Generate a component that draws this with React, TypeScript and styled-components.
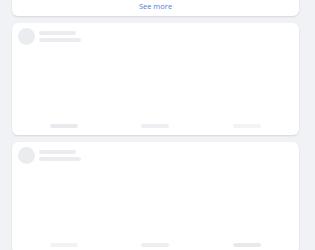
import React from "react";
import styled, { createGlobalStyle } from "styled-components";

const Global = createGlobalStyle`
  html, body { margin: 0; padding: 0; background: #f0f2f5; }
  body { font-family: "Open Sans", "Liberation Sans", sans-serif; overflow: hidden; }
`;

const Feed = styled.div`
  display: flex;
  flex-direction: column;
  gap: 7px;
  padding: 0 16px 0 12px;
  margin-top: -20px;
`;

const Card = styled.div<{ $h: number }>`
  background: #ffffff;
  border-radius: 6px;
  box-shadow: 0 1px 2px rgba(0, 0, 0, 0.12);
  height: ${(p) => p.$h}px;
  box-sizing: border-box;
  display: flex;
  flex-direction: column;
`;

const SeeMoreCard = styled(Card)`
  justify-content: flex-end;
  align-items: center;
  padding-bottom: 4px;
`;

const SeeMore = styled.a`
  color: #4f7bd8;
  font-size: 7.5px;
  line-height: 12px;
  text-decoration: none;
`;

const Header = styled.div`
  display: flex;
  align-items: center;
  gap: 4px;
  padding: 5px 6px 0 6px;
`;

const Avatar = styled.div`
  width: 17px;
  height: 17px;
  border-radius: 50%;
  background: #ebecf0;
`;

const Lines = styled.div`
  display: flex;
  flex-direction: column;
  gap: 3px;
`;

const Line = styled.div<{ $w: number }>`
  width: ${(p) => p.$w}px;
  height: 4px;
  border-radius: 2px;
  background: #ebecf0;
`;

const Body = styled.div`
  flex: 1;
`;

const Actions = styled.div`
  display: grid;
  grid-template-columns: repeat(3, 1fr);
  padding: 0 6px 7px 6px;
`;

const ActionCell = styled.div`
  display: flex;
  justify-content: center;
`;

const Bar = styled.div<{ $tone: string }>`
  width: 28px;
  height: 4px;
  border-radius: 2px;
  background: ${(p) => p.$tone};
`;

function PostSkeleton({ tones }: { tones: string[] }) {
  return (
    <Card $h={112}>
      <Header>
        <Avatar />
        <Lines>
          <Line $w={37} />
          <Line $w={42} />
        </Lines>
      </Header>
      <Body />
      <Actions>
        {tones.map((t, i) => (
          <ActionCell key={i}>
            <Bar $tone={t} />
          </ActionCell>
        ))}
      </Actions>
    </Card>
  );
}

export default function App() {
  return (
    <>
      <Global />
      <Feed>
        <SeeMoreCard $h={36}>
          <SeeMore href="#">See more</SeeMore>
        </SeeMoreCard>
        <PostSkeleton tones={["#e9eaee", "#eeeff2", "#f3f4f6"]} />
        <PostSkeleton tones={["#f1f2f4", "#eceef1", "#e8e9ed"]} />
      </Feed>
    </>
  );
}
